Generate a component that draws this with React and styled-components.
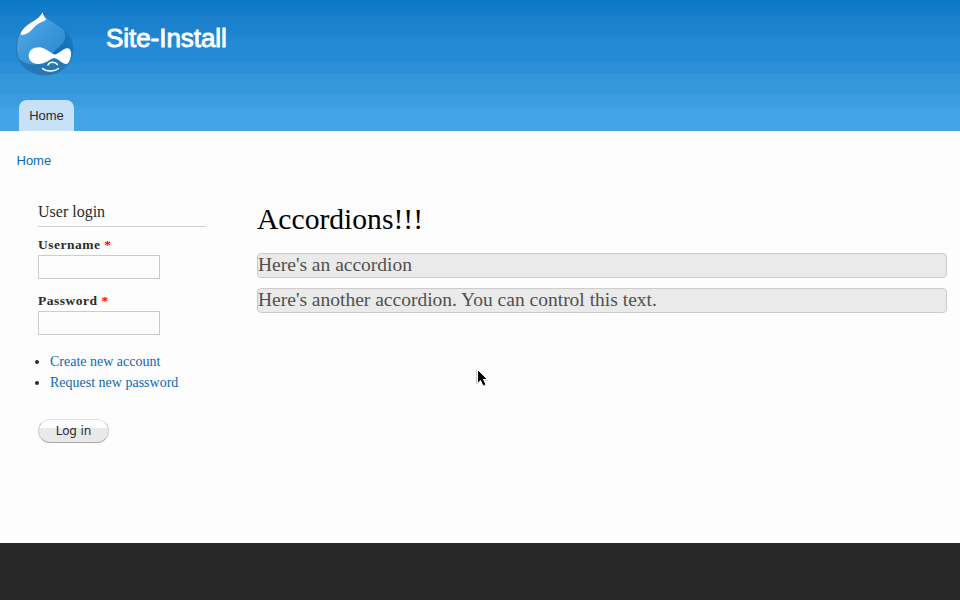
import React from "react";
import styled, { createGlobalStyle } from "styled-components";

const GlobalStyle = createGlobalStyle`
  *, *::before, *::after { box-sizing: border-box; }
  body { margin: 0; background: #fdfdfd; }
`;
const serif = `"Liberation Serif", "Times New Roman", serif`;
const sans = `"Liberation Sans", Arial, sans-serif`;

const Page = styled.div`
  height: 600px;
  display: flex;
  flex-direction: column;
  position: relative;
  overflow: hidden;
  background: #fdfdfd;
  color: #2b2b2b;
  font-family: ${serif};
`;
const Header = styled.header`
  height: 131px;
  display: flex;
  flex-direction: column;
  justify-content: space-between;
  background: linear-gradient(#0b79c6 0, #0f7bc9 8px, #147dcb 16px, #1b81cd 16px, #1c82ce 32px, #258ad5 41px, #258ad5 61px, #2c90d8 65px, #2c90d8 74px, #3397db 74px, #3497dc 92px, #3b9ce1 97px, #3b9ce1 104px, #45a4e8 110px, #45a4e8 131px);
`;
const Brand = styled.div`
  display: flex;
  align-items: flex-start;
  gap: 32px;
  padding: 11px 0 0 15px;
`;
const Logo = styled.svg`
  display: block;
  width: 59px;
  height: 65px;
`;
const SiteName = styled.h1`
  margin: 12px 0 0;
  font: 400 26px/30px ${sans};
  color: #fff;
  letter-spacing: -0.05px;
  -webkit-text-stroke: 0.9px #fff;
`;
const Nav = styled.nav`
  display: flex;
  padding-left: 19px;
`;
const Tab = styled.a`
  width: 55px;
  height: 31px;
  border-radius: 8px 8px 0 0;
  background: #c8e1f6;
  color: #2b2b2b;
  font: 13px/31px ${sans};
  text-align: center;
`;
const Breadcrumb = styled.a`
  height: 18px;
  margin: 21px 0 0 16.5px;
  font: 13px/18px ${sans};
  color: #0f68b3;
`;
const Columns = styled.div`
  flex: 1;
  display: grid;
  grid-template-columns: 168px 690px;
  column-gap: 51px;
  padding: 32px 0 0 38px;
`;
const Sidebar = styled.aside`
  display: flex;
  flex-direction: column;
  align-items: flex-start;
`;
const BlockTitle = styled.h2`
  width: 100%;
  height: 25px;
  margin: 0 0 10px;
  border-bottom: 1px solid #d0d0d0;
  font: 400 16px/20px ${serif};
`;
const Field = styled.label`
  display: block;
  height: 56px;
  font: 700 13.5px/16px ${serif};
  letter-spacing: 0.5px;
`;
const Required = styled.span`
  color: #f00;
`;
const Input = styled.input`
  display: block;
  width: 122px;
  height: 24px;
  margin: 2px 0 0;
  border: 1px solid #ccc;
  background: #fdfdfd;
`;
const Links = styled.ul`
  margin: 2px 0 0;
  padding: 0 0 0 12px;
  font: 14px/21px ${serif};
`;
const LinkItem = styled.li`
  &::marker { color: #2b2b2b; }
`;
const Link = styled.a`
  color: #0f68b3;
`;
const Button = styled.button`
  width: 71px;
  height: 24px;
  margin: 26px 0 0;
  padding: 0;
  border: 1px solid #ccc;
  border-top-color: #e0e0e0;
  border-bottom-color: #aaa;
  border-radius: 12px;
  background: linear-gradient(#fdfdfd 0 8px, #e9e9e9 8px);
  color: #2b2b2b;
  font: 12px/21px "DejaVu Sans", sans-serif;
  letter-spacing: -0.15px;
`;
const Main = styled.main`
  display: flex;
  flex-direction: column;
`;
const Title = styled.h2`
  margin: 0 0 16px;
  height: 35px;
  font: 400 29.6px/35px ${serif};
  color: #000;
`;
const Accordion = styled.h3`
  height: 25px;
  margin: 0 0 10px;
  border: 1px solid #ccc;
  border-radius: 4px;
  background: #eaeaea;
  color: #505050;
  font: 400 19.5px/22px ${serif};
`;
const Footer = styled.footer`
  height: 57px;
  background: #282828;
`;
const Pointer = styled.svg`
  position: absolute;
  left: 475px;
  top: 368px;
  width: 14px;
  height: 19px;
`;

const DropletLogo = () => (
  <Logo viewBox="0 0 59 65" aria-hidden="true">
    <defs>
      <linearGradient id="body" x1="0" y1="0" x2="1" y2="1">
        <stop offset="0" stopColor="#66afe1" />
        <stop offset=".4" stopColor="#3d99dc" />
        <stop offset="1" stopColor="#2784c8" />
      </linearGradient>
      <linearGradient id="shade" x1="1" y1="0" x2="0" y2="1">
        <stop offset="0" stopColor="#1a77bf" />
        <stop offset="1" stopColor="#0d6fbd" />
      </linearGradient>
    </defs>
    <path d="M27.500 .5C28.500 4 31 6.500 35 9C40 12 48 16.500 53 23C56.500 28 58 32 58 38C58 53 46 64 29.500 64C13 64 1.500 52 1.500 37C1.500 30 3 24 7 19C10.500 15 14 13 18 10C23 7 26.500 5 27.500 .5Z" fill="url(#body)" stroke="#286e9f" strokeWidth=".8" />
    <path d="M57.500 34C56 27 53 22 48.500 19C52 26 50 31 44 36C40 39 37 42 38 44C45 43 47 38 52 37C56 37 57 40 56.500 45C58 41 58 38 57.500 34Z" fill="url(#shade)" />
    <path d="M3.500 48C9 52 14 53.500 21 53.500C30 53 33 48 39 47C45 49 47 54 53.500 51C49 59 41 63.500 29.500 63.500C17 63.500 8 58 3.500 48Z" fill="#2478b8" />
    <path d="M27.500 1C28 4 29.500 6 31 8C31 10 27 10.500 24 12.500C19 15 17 20 12 22.500C9 24 6 24.500 5.500 23C7 18 12 14 17 11C22 8 26 5.500 27.500 1Z" fill="#fdfdfd" />
    <path d="M24 36.300C30 36.300 35 42 39.500 43.500C44 43 48 37.200 52.500 37.200C55.500 37.500 56.300 41 56 44C55.500 48 54 53 51 53C47 53 44 48 39.500 47C34.500 48 31 53 23 53C17 53 13.700 49 13.700 45C13.700 39.500 18 36.300 24 36.300Z" fill="#fff" />
    <path d="M33 54C34.500 50.500 40.500 50.500 42.300 53.500M27.500 57.500C31.500 61 40 60.500 43.500 57.500" fill="none" stroke="#fff" strokeWidth="1.500" strokeLinecap="round" />
  </Logo>
);

export default function App() {
  return (
    <>
      <GlobalStyle />
      <Page>
        <Header>
          <Brand>
            <DropletLogo />
            <SiteName>Site-Install</SiteName>
          </Brand>
          <Nav><Tab>Home</Tab></Nav>
        </Header>
        <Breadcrumb>Home</Breadcrumb>
        <Columns>
          <Sidebar>
            <BlockTitle>User login</BlockTitle>
            <Field>Username <Required>*</Required><Input /></Field>
            <Field>Password <Required>*</Required><Input type="password" /></Field>
            <Links>
              <LinkItem><Link>Create new account</Link></LinkItem>
              <LinkItem><Link>Request new password</Link></LinkItem>
            </Links>
            <Button>Log in</Button>
          </Sidebar>
          <Main>
            <Title>Accordions!!!</Title>
            <Accordion>Here's an accordion</Accordion>
            <Accordion>Here's another accordion. You can control this text.</Accordion>
          </Main>
        </Columns>
        <Footer />
        <Pointer viewBox="0 0 14 19" aria-hidden="true">
          <path d="M2.500 1.500V15.500L5.500 12.500L8 18L11 16.500L8.500 11.500H12.500Z" fill="#000" stroke="#fff" />
          <path d="M1.500 1V16L5 14M7.500 18L11.500 17M9.500 12.500H13" fill="none" stroke="#bbb" strokeWidth=".7" />
        </Pointer>
      </Page>
    </>
  );
}
